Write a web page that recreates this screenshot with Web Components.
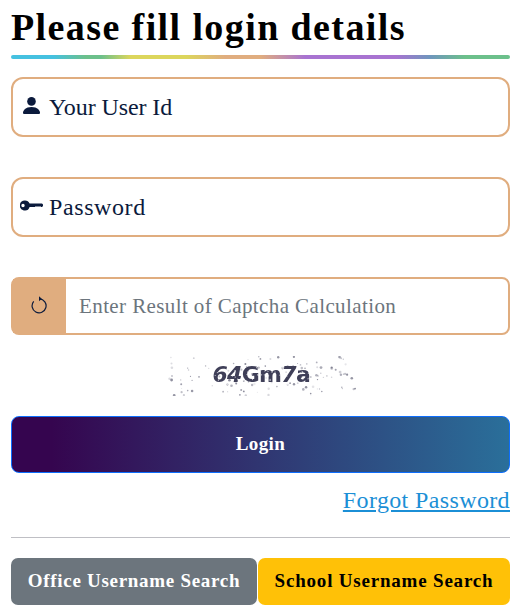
<!DOCTYPE html>
<html><head><meta charset="utf-8"><style>
html,body{margin:0;background:#fff}
body{font-family:"Liberation Serif",serif;width:519px;height:610px;overflow:hidden}
</style></head><body>
<login-panel>
<login-title>Please fill login details</login-title>
<icon-field kind="user" label="Your User Id" ls="-.1"></icon-field>
<icon-field kind="key" label="Password" ls=".6"></icon-field>
<captcha-field placeholder="Enter Result of Captcha Calculation"></captcha-field>
<captcha-image></captcha-image>
<login-button>Login</login-button>
<forgot-link>Forgot Password</forgot-link>
<search-row></search-row>
</login-panel>
<script>
function def(name,html){customElements.define(name,class extends HTMLElement{
 connectedCallback(){ if(this.shadowRoot)return; const s=this.attachShadow({mode:'open'}); s.innerHTML=typeof html==='function'?html(this):html; }
});}
def('login-panel',`<style>:host{display:flex;flex-direction:column;box-sizing:border-box;width:519px;height:610px;padding:0 9px 0 11px}</style><slot></slot>`);
def('login-title',`<style>:host{display:block;height:77px}
h1{margin:0;padding-top:8px;height:55px;box-sizing:border-box;font:700 38px/38px "Liberation Serif",serif;letter-spacing:1.4px;color:#000;white-space:nowrap}
.bar{height:4px;border-radius:2px;background:linear-gradient(90deg,#45c1e0 0,#45c1e0 8.4%,#6cc08b 15%,#6cc08b 18%,#dcd65c 24%,#dcd65c 35%,#e0ad7f 43%,#e0ad7f 50%,#a873d1 59%,#a873d1 77%,#6f96bd 84%,#6cc08b 91%,#6cc08b 100%)}
</style><h1><slot></slot></h1><div class="bar"></div>`);
const ICONS={user:`<svg width="17" height="17" viewBox="0 0 17 17" fill="#0b1a3c"><circle cx="8.500" cy="4.400" r="4.300"/><path d="M1.200 17C.3 17 0 16.300 0 15.700 0 13.500 2.500 10 8.500 10S17 13.500 17 15.700c0 .6-.3 1.300-1.200 1.300H1.200Z"/></svg>`,
key:`<svg width="23" height="11" viewBox="0 0 23 11" fill="#0b1a3c"><path fill-rule="evenodd" d="M5 .5a5 5 0 0 1 4.600 3H22l1 1v1.500l-1 1h-1l-1-1-1 1-1-1-1 1-1-1-1 1H9.600A5 5 0 1 1 5 .5Zm-2 3.300a1.700 1.700 0 1 0 0 3.400 1.700 1.700 0 0 0 0-3.400Z"/></svg>`};
def('icon-field',el=>`<style>:host{display:flex;align-items:center;box-sizing:border-box;height:60px;margin-bottom:40px;border:2px solid #e0ad7f;border-radius:12px;background:#fff;color:#0b1a3c}
.i{width:36px;flex:none;display:flex;justify-content:center;margin-top:-3px}
.l{font:24px/30px "Liberation Serif",serif;letter-spacing:${el.getAttribute('ls')}px}</style>
<span class="i">${ICONS[el.getAttribute('kind')]}</span><span class="l">${el.getAttribute('label')}</span>`);
def('captcha-field',el=>`<style>:host{display:flex;box-sizing:border-box;height:58px;border:2px solid #e0ad7f;border-radius:8px;background:#fff}
.a{width:53px;flex:none;background:#e0ad7f;display:flex;align-items:center;justify-content:center}
svg{margin:-3px 2px 0 0}
.p{flex:1;display:flex;align-items:center;padding-left:13px;font:21px/26px "Liberation Serif",serif;letter-spacing:.4px;color:#6c757d;white-space:nowrap}</style>
<span class="a"><svg width="16" height="18" viewBox="0 0 16 18" fill="none" stroke="#0b1a3c" stroke-width="1.200"><path d="M8.600 2.800A7 7 0 1 1 2.700 5.300"/><path d="M8 .3 10.800 2.800 8 5.200Z" fill="#0b1a3c" stroke="none"/></svg></span>
<span class="p">${el.getAttribute('placeholder')}</span>`);
def('captcha-image',el=>{
 let n=1,r=()=>{const x=Math.sin(n++*12.9898)*43758.5453;return x-Math.floor(x)},d='';
 for(let i=0;i<120;i++){d+=`<circle cx="${(r()*190).toFixed(1)}" cy="${(r()*40).toFixed(1)}" r="${(.5+r()*.9).toFixed(1)}" fill="#5a5a70" opacity="${(.12+r()*.6).toFixed(2)}"/>`}
 let o='';
 for(let i=0;i<90;i++){o+=`<circle cx="${(46+r()*98).toFixed(1)}" cy="${(8+r()*24).toFixed(1)}" r=".6" fill="#fff" opacity=".75"/>`}
 return `<style>:host{display:flex;justify-content:center;height:81px;align-items:flex-start}
.c{position:relative;width:190px;height:40px;margin-top:21px}
svg{position:absolute;inset:0;filter:blur(.4px)}
.t{position:absolute;left:47px;top:6px;font:700 22px/26px "DejaVu Sans",sans-serif;letter-spacing:-.7px;color:#3f3f58;filter:blur(.55px);white-space:nowrap}
i{font-style:oblique}</style>
<div class="c"><svg width="190" height="40">${d}</svg><span class="t"><i>64</i>Gm<i>7</i>a</span><svg width="190" height="40">${o}</svg></div>`});
def('login-button',`<style>:host{display:flex;align-items:center;justify-content:center;box-sizing:border-box;height:57px;border:1px solid #0d6efd;border-radius:8px;background:linear-gradient(90deg,#35054f 0,#35054f 8%,#2a6f9a 100%);color:#fff;font:700 19px/24px "Liberation Serif",serif;letter-spacing:.4px;padding-bottom:2px}</style><slot></slot>`);
def('forgot-link',`<style>:host{display:flex;justify-content:flex-end;height:65px;padding-top:13px;box-sizing:border-box;border-bottom:1px solid #bfbfc4;font:24px/28px "Liberation Serif",serif;letter-spacing:.37px;color:#1b8fd6}
u{color:inherit}</style><u><slot></slot></u>`);
def('button-box',el=>`<style>:host{display:flex;align-items:center;justify-content:center;box-sizing:border-box;height:47px;padding-bottom:2px;border-radius:7px;font:700 19px/24px "Liberation Serif",serif;letter-spacing:${el.getAttribute('ls')}px;white-space:nowrap;background:${el.getAttribute('bg')};color:${el.getAttribute('fg')}}</style><slot></slot>`);
def('search-row',`<style>:host{display:grid;grid-template-columns:246px 252px;gap:1px;margin-top:20px}</style>
<button-box ls=".7" bg="#6c757d" fg="#fff">Office Username Search</button-box><button-box ls=".8" bg="#ffc107" fg="#000">School Username Search</button-box>`);
</script>
</body></html>
